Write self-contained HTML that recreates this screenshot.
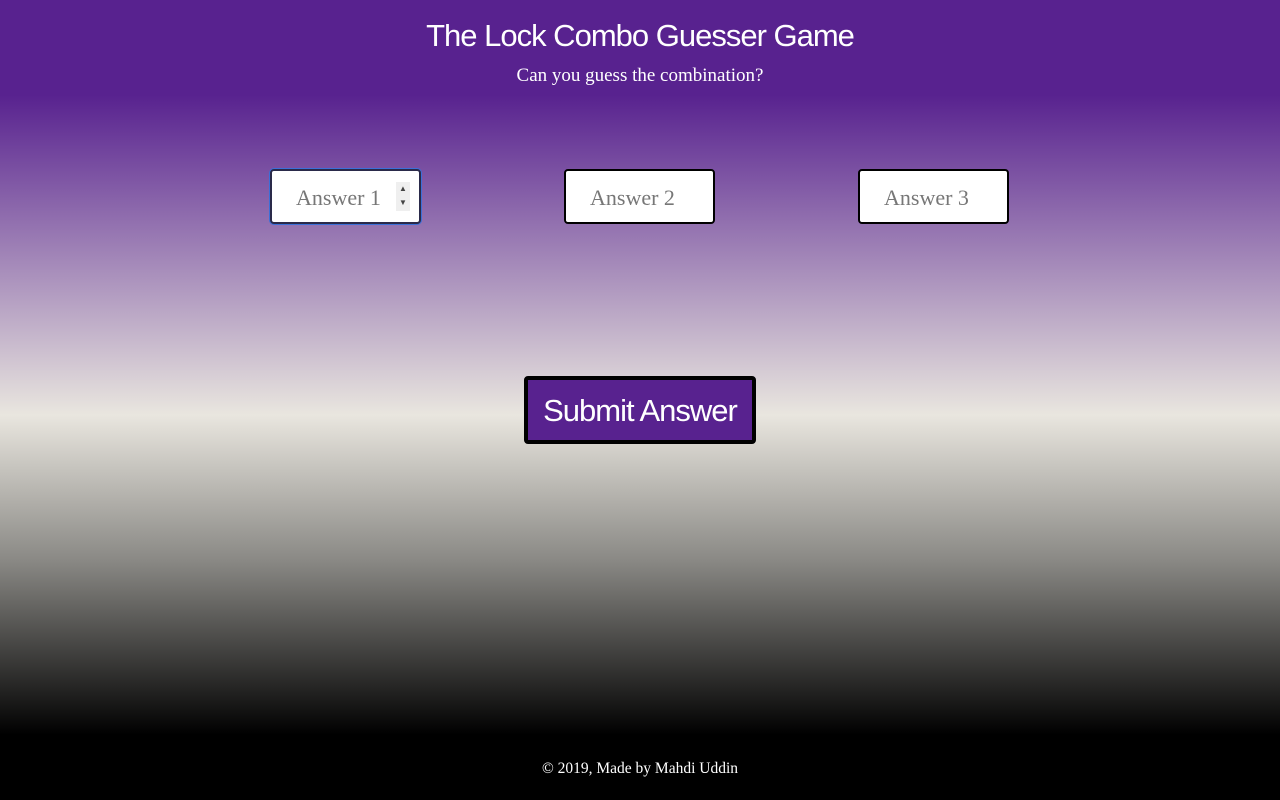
<!DOCTYPE html>
<html><head><meta charset="utf-8"><style>
html,body{margin:0;height:800px;overflow:hidden}
body{background:linear-gradient(to bottom,#58228f 0px,#58228f 95px,#e9e6df 415px,#8a8985 560px,#000 735px,#000 800px);position:relative;font-family:"Liberation Serif",serif}
h1{position:absolute;top:18px;left:0;width:1280px;text-align:center;margin:0;color:#fff;font-family:"Liberation Sans",sans-serif;font-weight:normal;font-size:31px;letter-spacing:-1px}
.sub{position:absolute;top:65px;left:0;width:1280px;text-align:center;color:#fff;font-size:19px}
.in{position:absolute;top:169px;width:147px;height:51px;background:#fff;border:2px solid #000;border-radius:4px;box-sizing:content-box}
.in span{position:absolute;left:24px;top:14px;font-size:22px;color:#777}
.sp{position:absolute;left:124px;top:11px;width:14px;height:29px;background:#efefef;font-size:8px;color:#444;text-align:center;line-height:14px}
.btn{position:absolute;left:524px;top:376px;width:224px;height:60px;background:#58228f;border:4px solid #000;border-radius:4px;color:#fff;font-family:"Liberation Sans",sans-serif;font-size:31px;text-align:center;line-height:62px;letter-spacing:-1px}
.ft{position:absolute;top:760px;left:0;width:1280px;text-align:center;color:#fff;font-size:15.5px}
</style></head><body>
<h1>The Lock Combo Guesser Game</h1>
<div class="sub">Can you guess the combination?</div>
<div class="in" style="left:270px;border-color:#2a2a4a;box-shadow:0 0 0 1px #3b6fd8"><span>Answer 1</span><div class="sp">▲<br>▼</div></div>
<div class="in" style="left:564px"><span>Answer 2</span></div>
<div class="in" style="left:858px"><span>Answer 3</span></div>
<div class="btn">Submit Answer</div>
<div class="ft">© 2019, Made by Mahdi Uddin</div>
</body></html>
